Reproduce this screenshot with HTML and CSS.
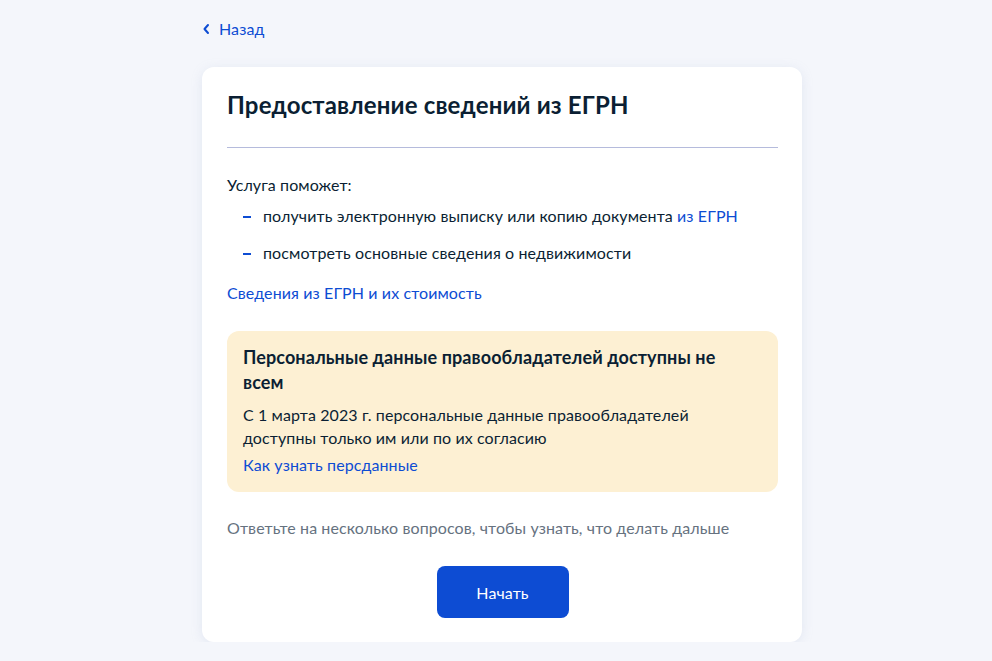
FILE: index.html
```html
<!DOCTYPE html>
<html lang="ru">
<head>
<meta charset="utf-8">
<title>Предоставление сведений из ЕГРН</title>
<link rel="stylesheet" href="styles.css">
</head>
<body>
<div class="page">
  <a class="back" href="#">
    <svg class="back-icon" width="8" height="12" viewBox="0 0 8 12"><path d="M6 2 L2.5 6 L6 10" fill="none" stroke="#0d4cd3" stroke-width="2" stroke-linecap="round" stroke-linejoin="round"/></svg>
    <span>Назад</span>
  </a>
  <main class="card">
    <h1 class="title">Предоставление сведений из ЕГРН</h1>
    <hr class="divider">
    <p class="lead">Услуга поможет:</p>
    <ul class="list">
      <li>получить электронную выписку или копию документа <a href="#">из ЕГРН</a></li>
      <li>посмотреть основные сведения о недвижимости</li>
    </ul>
    <a class="link" href="#">Сведения из ЕГРН и их стоимость</a>
    <div class="notice">
      <h2 class="notice-title">Персональные данные правообладателей доступны не всем</h2>
      <p class="notice-text">С 1 марта 2023 г. персональные данные правообладателей доступны только им или по их согласию</p>
      <a class="link notice-link" href="#">Как узнать персданные</a>
    </div>
    <p class="hint">Ответьте на несколько вопросов, чтобы узнать, что делать дальше</p>
    <div class="actions">
      <button class="btn">Начать</button>
    </div>
  </main>
</div>
</body>
</html>
```

FILE: styles.css
```css
* { box-sizing: border-box; }
html, body {
  margin: 0;
  padding: 0;
  background: #f4f6fb;
  font-family: Lato, "Noto Sans", sans-serif;
  color: #0b1f33;
  letter-spacing: 0.1px;
}
.page {
  width: 600px;
  margin-left: 202px;
  padding-top: 19px;
}
a { color: #0d4cd3; text-decoration: none; }
.back {
  display: inline-flex;
  align-items: center;
  gap: 9px;
  font-size: 16px;
  line-height: 20px;
  height: 20px;
}
.back-icon { display: block; }
.card {
  margin-top: 28px;
  background: #fff;
  border-radius: 12px;
  box-shadow: 0 2px 12px rgba(150, 165, 200, 0.18);
  padding: 24px 24px 24px 25px;
}
.title {
  margin: 0;
  font-size: 24px;
  line-height: 28px;
  font-weight: 700;
  letter-spacing: 0.15px;
}
.divider {
  margin: 28px 0 0;
  border: 0;
  height: 1px;
  background: #b5bbdc;
}
.lead {
  margin: 25px 0 0;
  font-size: 16px;
  line-height: 24px;
}
.list {
  list-style: none;
  margin: 7px 0 0;
  padding: 0 0 0 36px;
  display: flex;
  flex-direction: column;
  gap: 13px;
  font-size: 16px;
  line-height: 24px;
}
.list li { position: relative; }
.list li::before {
  content: "";
  position: absolute;
  left: -20px;
  top: 12px;
  width: 8px;
  height: 2px;
  background: #0d4cd3;
}
.link {
  display: inline-block;
  margin-top: 16px;
  font-size: 16px;
  line-height: 24px;
}
.notice {
  margin-top: 26px;
  background: #fdf0d3;
  border-radius: 12px;
  padding: 14px 16px 16px;
}
.notice-title {
  margin: 0;
  font-size: 18px;
  line-height: 25px;
  font-weight: 700;
  max-width: 490px;
}
.notice-text {
  margin: 8px 0 0;
  font-size: 16px;
  line-height: 23px;
  max-width: 470px;
}
.notice-link {
  margin-top: 4px;
  line-height: 23px;
}
.hint {
  margin: 24px 0 0;
  font-size: 16px;
  line-height: 24px;
  color: #66727f;
}
.actions {
  display: flex;
  justify-content: center;
  margin-top: 26px;
}
.btn {
  width: 132px;
  height: 52px;
  border: 0;
  border-radius: 8px;
  background: #0d4cd3;
  color: #fff;
  font-family: Lato, "Noto Sans", sans-serif;
  font-size: 16px;
  letter-spacing: 0.1px;
}
```
